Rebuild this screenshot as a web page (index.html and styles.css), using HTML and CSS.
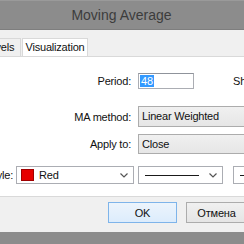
FILE: index.html
```html
<!DOCTYPE html>
<html lang="en">

<head>
    <meta charset="UTF-8">
    <meta name="viewport" content="width=device-width, initial-scale=1.0">
    <title>Moving Average</title>
    <link rel="stylesheet" href="styles.css">
</head>

<body>
    <div class="window">
        <div class="titlebar">Moving Average</div>
        <div class="client">
            <div class="tabs">
                <div class="tab tab-params">Parameters</div>
                <div class="tab tab-levels">Levels</div>
                <div class="tab tab-visual active">Visualization</div>
            </div>
            <div class="panel">
                <div class="row row-period">
                    <span class="label">Period:</span>
                    <div class="edit edit-period"><span class="selected">48</span></div>
                    <span class="label-shift">Shift:</span>
                    <div class="edit edit-shift">0</div>
                </div>
                <div class="row row-method">
                    <span class="label">MA method:</span>
                    <div class="select">Linear Weighted</div>
                </div>
                <div class="row row-apply">
                    <span class="label">Apply to:</span>
                    <div class="select">Close</div>
                </div>
                <div class="row row-style">
                    <span class="label-style">Style:</span>
                    <div class="combo combo-color">
                        <span class="swatch"></span>
                        <span class="combo-text">Red</span>
                        <svg class="chevron" width="8" height="5" viewBox="0 0 8 5"><path d="M0.5 0.5 L4 4 L7.5 0.5" fill="none" stroke="#555" stroke-width="1.2"/></svg>
                    </div>
                    <div class="combo combo-line">
                        <span class="line-sample"></span>
                        <svg class="chevron" width="8" height="5" viewBox="0 0 8 5"><path d="M0.5 0.5 L4 4 L7.5 0.5" fill="none" stroke="#555" stroke-width="1.2"/></svg>
                    </div>
                    <div class="combo combo-width">
                        <span class="line-sample"></span>
                        <svg class="chevron" width="8" height="5" viewBox="0 0 8 5"><path d="M0.5 0.5 L4 4 L7.5 0.5" fill="none" stroke="#555" stroke-width="1.2"/></svg>
                    </div>
                </div>
            </div>
            <div class="buttons">
                <button class="btn btn-ok">OK</button>
                <button class="btn btn-cancel">Отмена</button>
                <button class="btn">Сброс</button>
            </div>
        </div>
        <div class="frame-bottom"></div>
    </div>
</body>

</html>
```

FILE: styles.css
```css
* {
    margin: 0;
    padding: 0;
    box-sizing: border-box;
}

body {
    width: 244px;
    height: 244px;
    overflow: hidden;
    background: #8c8c8c;
    font-family: 'Liberation Sans', Arial, sans-serif;
    font-size: 11px;
    letter-spacing: -0.2px;
    color: #111;
}

.window {
    width: 423px;
    margin-left: -90px;
    background: #8c8c8c;
}

.titlebar {
    height: 30px;
    line-height: 28px;
    text-align: center;
    font-size: 14px;
    letter-spacing: 0;
    color: #3c3c3c;
    background: #8c8c8c;
    border-top: 1px solid #9a9a9a;
    border-bottom: 1px solid #7e7e7e;
}

.client {
    margin: 0 8px;
    background: #f0f0f0;
    padding: 8px 0 9px;
}

.tabs {
    display: flex;
    height: 18px;
    padding-left: 2px;
}

.tab {
    height: 18px;
    line-height: 16px;
    text-align: center;
    border: 1px solid #d9d9d9;
    border-bottom: none;
    background: #f0f0f0;
    margin-right: 1px;
}

.tab-params { width: 56px; }
.tab-levels { width: 44px; }
.tab-visual { width: 66px; }

.tab.active {
    background: #fff;
}

.panel {
    background: #fff;
    border: 1px solid #d9d9d9;
    height: 141px;
    padding-top: 16px;
}

.row {
    display: flex;
    align-items: center;
}

.label {
    width: 212px;
    text-align: right;
    margin-right: 7px;
}

.edit {
    height: 16px;
    border: 1px solid #abadb3;
    border-top-color: #8f939b;
    background: #fff;
    padding-left: 1px;
    line-height: 14px;
}

.edit-period {
    width: 56px;
}

.selected {
    background: #3399ff;
    color: #fff;
    padding: 0 1px;
}

.label-shift {
    margin-left: 39px;
    margin-right: 7px;
}

.edit-shift {
    width: 40px;
}

.row-method {
    margin-top: 17px;
}

.row-apply {
    margin-top: 7px;
}

.select {
    width: 150px;
    height: 21px;
    line-height: 19px;
    padding-left: 3px;
    border: 1px solid #acacac;
    background: linear-gradient(#f0f0f0, #e6e6e6);
}

.row-apply .select {
    height: 20px;
    line-height: 18px;
}

.row-style {
    margin-top: 12px;
}

.label-style {
    width: 94px;
    text-align: right;
    margin-right: 3px;
}

.combo {
    display: flex;
    align-items: center;
    height: 18px;
    border: 1px solid #abadb3;
    background: #fff;
    padding-left: 4px;
}

.combo-color {
    width: 118px;
    margin-right: 4px;
}

.combo-line {
    width: 85px;
    margin-right: 10px;
    padding-left: 6px;
}

.combo-width {
    width: 85px;
    padding-left: 6px;
}

.swatch {
    width: 13px;
    height: 12px;
    background: #e60000;
    border: 1px solid #a00000;
    margin-right: 5px;
}

.combo-text {
    flex: 1;
}

.line-sample {
    flex: 1;
    height: 1px;
    background: #1a1a1a;
    margin-right: 10px;
}

.chevron {
    margin-right: 5px;
}

.buttons {
    display: flex;
    gap: 9px;
    padding: 5px 0 0 190px;
}

.btn {
    height: 21px;
    width: 70px;
    font-family: inherit;
    font-size: 11px;
    letter-spacing: inherit;
    color: #111;
    border: 1px solid #acacac;
    background: linear-gradient(#f0f0f0, #e5e5e5);
}

.btn-ok {
    border-color: #7eb4ea;
    background: linear-gradient(#ecf4fc, #dcecfc);
}

.btn-cancel {
    width: 62px;
}

.frame-bottom {
    height: 20px;
    background: #8c8c8c;
}
```
